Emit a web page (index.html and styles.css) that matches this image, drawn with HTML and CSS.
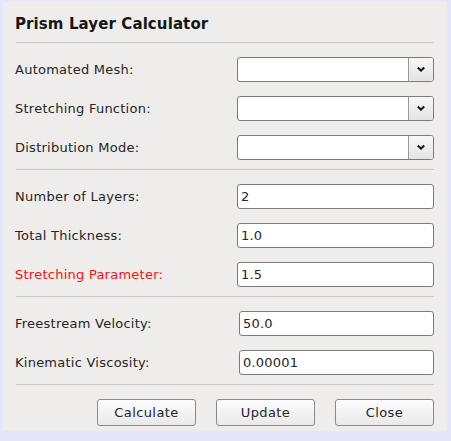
FILE: index.html
```html
<!DOCTYPE html>
<html>
<head>
<meta charset="utf-8">
<link rel="stylesheet" href="styles.css">
</head>
<body>
<div class="panel">
  <div class="title">Prism Layer Calculator</div>
  <div class="sep"></div>
  <div class="section">
    <div class="row"><span class="label">Automated Mesh:</span><div class="combo"><div class="combo-field"></div><div class="combo-btn"><svg width="10" height="7" viewBox="0 0 10 7"><path d="M1.8 1.5 L5 4.7 L8.2 1.5" fill="none" stroke="#111" stroke-width="2"/></svg></div></div></div>
    <div class="row"><span class="label">Stretching Function:</span><div class="combo"><div class="combo-field"></div><div class="combo-btn"><svg width="10" height="7" viewBox="0 0 10 7"><path d="M1.8 1.5 L5 4.7 L8.2 1.5" fill="none" stroke="#111" stroke-width="2"/></svg></div></div></div>
    <div class="row"><span class="label">Distribution Mode:</span><div class="combo"><div class="combo-field"></div><div class="combo-btn"><svg width="10" height="7" viewBox="0 0 10 7"><path d="M1.8 1.5 L5 4.7 L8.2 1.5" fill="none" stroke="#111" stroke-width="2"/></svg></div></div></div>
  </div>
  <div class="sep"></div>
  <div class="section">
    <div class="row"><span class="label">Number of Layers:</span><div class="input">2</div></div>
    <div class="row"><span class="label">Total Thickness:</span><div class="input">1.0</div></div>
    <div class="row"><span class="label red">Stretching Parameter:</span><div class="input">1.5</div></div>
  </div>
  <div class="sep"></div>
  <div class="section shifted">
    <div class="row"><span class="label">Freestream Velocity:</span><div class="input">50.0</div></div>
    <div class="row"><span class="label">Kinematic Viscosity:</span><div class="input">0.00001</div></div>
  </div>
  <div class="sep"></div>
  <div class="buttons">
    <div class="btn">Calculate</div>
    <div class="btn">Update</div>
    <div class="btn">Close</div>
  </div>
</div>
</body>
</html>
```
FILE: styles.css
```css
html, body {
  margin: 0;
  padding: 0;
}
body {
  background: #e6e6fa;
  width: 451px;
  height: 441px;
  overflow: hidden;
  font-family: "DejaVu Sans", sans-serif;
  font-size: 13px;
  color: #262626;
}
.panel {
  margin: 2px 4px 0 3px;
  height: 429px;
  background: #eeedeb;
  padding: 12px 13px 0 12px;
  box-sizing: border-box;
}
.title {
  font-weight: bold;
  font-size: 15px;
  line-height: 20px;
  height: 20px;
  margin-bottom: 8px;
  letter-spacing: 0.1px;
  color: #161616;
}
.sep {
  height: 1px;
  background: #c9c8c6;
  margin-left: 1px;
}
.section {
  padding: 14px 0 9px 0;
  display: flex;
  flex-direction: column;
  gap: 14px;
}
.row {
  display: flex;
  align-items: center;
  justify-content: space-between;
  height: 25px;
}
.label {
  letter-spacing: 0.25px;
}
.red {
  color: #f01414;
}
.combo {
  width: 197px;
  height: 25px;
  box-sizing: border-box;
  border: 1px solid #7b7b7b;
  border-radius: 3px;
  display: flex;
  background: #fff;
  overflow: hidden;
}
.combo-field {
  flex: 1;
}
.combo-btn {
  width: 24px;
  border-left: 1px solid #9a9a9a;
  background: linear-gradient(#f7f7f7, #e4e4e4);
  display: flex;
  align-items: center;
  justify-content: center;
}
.input {
  width: 197px;
  height: 25px;
  box-sizing: border-box;
  border: 1px solid #7b7b7b;
  border-radius: 3px;
  background: #fff;
  padding-left: 3px;
  line-height: 23px;
  letter-spacing: 0.2px;
}
.shifted .input {
  width: 195px;
}
.buttons {
  padding-top: 14px;
  display: flex;
  justify-content: flex-end;
  gap: 20px;
}
.btn {
  width: 99px;
  height: 27px;
  box-sizing: border-box;
  border: 1px solid #8a8a8a;
  border-radius: 3px;
  background: linear-gradient(#fdfdfd, #e9e9e9);
  display: flex;
  align-items: center;
  justify-content: center;
  letter-spacing: 0.4px;
}
```
